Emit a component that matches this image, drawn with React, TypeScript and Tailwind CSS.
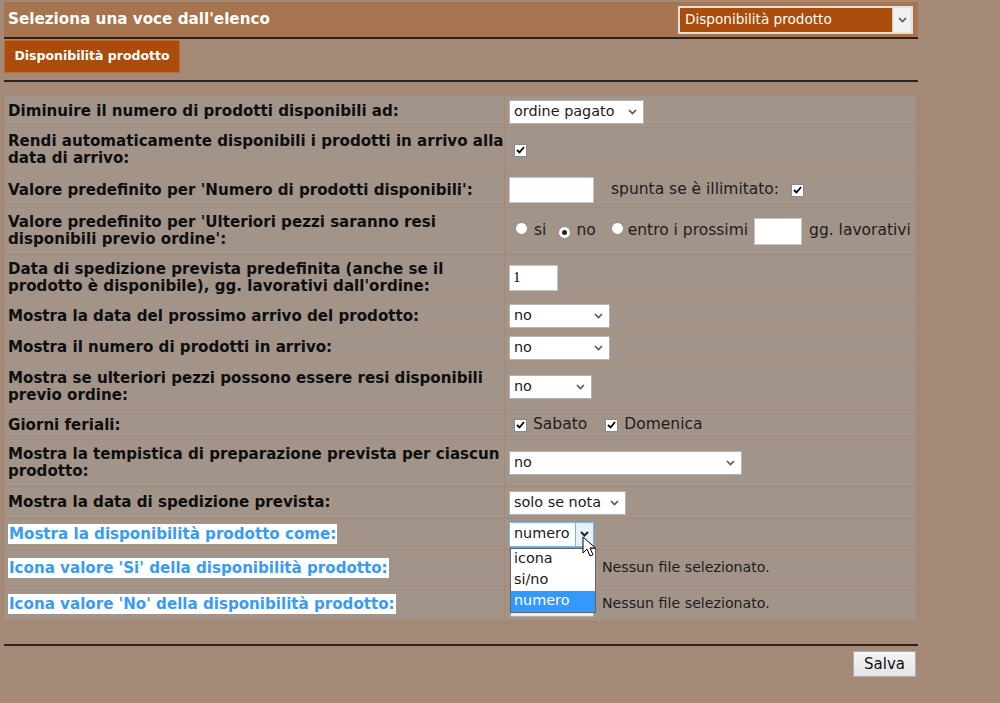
import React from 'react'

const sans = "font-['DejaVu_Sans',Verdana,sans-serif]"
const ctl = "font-['DejaVu_Sans',Tahoma,sans-serif]"

function Chevron({ dark = false }: { dark?: boolean }) {
  return (
    <svg width="9" height="6" viewBox="0 0 9 6" className="shrink-0">
      <path d="M1 1l3.5 3.5L8 1" fill="none" stroke={dark ? '#222' : '#555'} strokeWidth={dark ? 2 : 1.6} />
    </svg>
  )
}

function Select({ w, value }: { w: string; value: string }) {
  return (
    <div
      className={`${w} h-[24px] bg-white border border-[#b3b3b3] flex items-center justify-between pl-[4px] pr-[6px] text-[14.4px] text-[#1a1a1a] ${ctl}`}
    >
      <span>{value}</span>
      <Chevron />
    </div>
  )
}

function Check() {
  return (
    <span className="w-[13px] h-[13px] bg-white border border-[#8a8a8a] inline-flex items-center justify-center shrink-0">
      <svg width="9" height="8" viewBox="0 0 9 8">
        <path d="M1 4l2.5 2.5L8 1" fill="none" stroke="#000" strokeWidth="1.8" />
      </svg>
    </span>
  )
}

function Radio({ on = false }: { on?: boolean }) {
  return (
    <span className="w-[13px] h-[13px] rounded-full bg-white border border-[#8a8a8a] inline-flex items-center justify-center shrink-0">
      {on && <span className="w-[5px] h-[5px] rounded-full bg-[#222]" />}
    </span>
  )
}

function Row({
  h,
  label,
  hi = false,
  children,
}: {
  h: string
  label: React.ReactNode
  hi?: boolean
  children?: React.ReactNode
}) {
  return (
    <div className={`flex ${h} border-b border-[#a9896f]`}>
      <div className="w-[500px] shrink-0 border-r border-[#a9896f] flex items-center pl-[3px]">
        {hi ? (
          <span className={`bg-white text-[#3a9af7] font-bold text-[15.1px] leading-[20px] px-[1px] whitespace-nowrap ${sans}`}>
            {label}
          </span>
        ) : (
          <span className={`text-[#0e0e0e] font-bold text-[15.1px] leading-[17px] whitespace-nowrap ${sans}`}>{label}</span>
        )}
      </div>
      <div className={`flex-1 flex items-center pl-[4px] text-[15.5px] text-[#1d1d1d] ${ctl}`}>{children}</div>
    </div>
  )
}

function FileRow() {
  return (
    <div className="flex items-center">
      <div className="w-[84px] h-[26px] bg-[#ededed] border border-[#adadad] ml-[1px]" />
      <span className="ml-[8px] text-[14.2px]">Nessun file selezionato.</span>
    </div>
  )
}

export default function App() {
  return (
    <div className="min-h-[703px] w-full bg-[#a38976] relative overflow-hidden">
      <div className="w-[914px] ml-[4px] pt-[2px]">
        {/* header */}
        <div className="h-[35px] bg-[#a6744f] flex items-center justify-between pl-[4px] pr-[5px]">
          <span className={`text-white font-bold text-[15.2px] ${sans}`}>Seleziona una voce dall'elenco</span>
          <div className="w-[235px] h-[28px] border-2 border-[#e6e0dc] bg-[#ab4c0a] flex items-center justify-between">
            <span className={`text-white text-[13.6px] pl-[5px] ${ctl}`}>Disponibilità prodotto</span>
            <div className="w-[19px] h-full bg-[#f0f0f0] border-l border-[#c8c8c8] flex items-center justify-center">
              <Chevron />
            </div>
          </div>
        </div>
        <div className="h-[2px] bg-[#2a221d]" />

        {/* tab */}
        <div className="mt-[1px] h-[33px] w-[176px] bg-[#ab4c0a] border border-[#bd6a34] flex items-center justify-center">
          <span className={`text-white font-bold text-[12.5px] ${sans}`}>Disponibilità prodotto</span>
        </div>
        <div className="mt-[7px] h-[2px] bg-[#2a221d]" />

        {/* form table */}
        <div className="mt-[14px] ml-[1px] w-[911px] bg-[#a29489]">
          <Row h="h-[32px]" label="Diminuire il numero di prodotti disponibili ad:">
            <Select w="w-[135px]" value="ordine pagato" />
          </Row>
          <Row
            h="h-[45px]"
            label={
              <>
                Rendi automaticamente disponibili i prodotti in arrivo alla
                <br />
                data di arrivo:
              </>
            }
          >
            <span className="ml-[5px]">
              <Check />
            </span>
          </Row>
          <Row h="h-[35px]" label="Valore predefinito per 'Numero di prodotti disponibili':">
            <div className="w-[85px] h-[26px] bg-white border border-[#c4c4c4]" />
            <span className="ml-[17px]">spunta se è illimitato:</span>
            <span className="ml-[12px]">
              <Check />
            </span>
          </Row>
          <Row
            h="h-[47px]"
            label={
              <>
                Valore predefinito per 'Ulteriori pezzi saranno resi
                <br />
                disponibili previo ordine':
              </>
            }
          >
            <span className="ml-[6px]">
              <Radio />
            </span>
            <span className="ml-[6px]">si</span>
            <span className="ml-[12px]">
              <Radio on />
            </span>
            <span className="ml-[5px]">no</span>
            <span className="ml-[15px]">
              <Radio />
            </span>
            <span className="ml-[4px]">entro i prossimi</span>
            <div className="ml-[6px] w-[48px] h-[27px] bg-white border border-[#c4c4c4]" />
            <span className="ml-[7px] whitespace-nowrap">gg. lavorativi</span>
          </Row>
          <Row
            h="h-[46px]"
            label={
              <>
                Data di spedizione prevista predefinita (anche se il
                <br />
                prodotto è disponibile), gg. lavorativi dall'ordine:
              </>
            }
          >
            <div className="w-[49px] h-[26px] bg-white border border-[#c4c4c4] flex items-center pl-[3px]">
              <span className="font-['Liberation_Serif',serif] text-[15px] text-black">1</span>
            </div>
          </Row>
          <Row h="h-[31px]" label="Mostra la data del prossimo arrivo del prodotto:">
            <Select w="w-[101px]" value="no" />
          </Row>
          <Row h="h-[32px]" label="Mostra il numero di prodotti in arrivo:">
            <Select w="w-[101px]" value="no" />
          </Row>
          <Row
            h="h-[47px]"
            label={
              <>
                Mostra se ulteriori pezzi possono essere resi disponibili
                <br />
                previo ordine:
              </>
            }
          >
            <Select w="w-[83px]" value="no" />
          </Row>
          <Row h="h-[29px]" label="Giorni feriali:">
            <span className="ml-[5px]">
              <Check />
            </span>
            <span className="ml-[6px]">Sabato</span>
            <span className="ml-[18px]">
              <Check />
            </span>
            <span className="ml-[6px]">Domenica</span>
          </Row>
          <Row
            h="h-[47px]"
            label={
              <>
                Mostra la tempistica di preparazione prevista per ciascun
                <br />
                prodotto:
              </>
            }
          >
            <Select w="w-[233px]" value="no" />
          </Row>
          <Row h="h-[32px]" label="Mostra la data di spedizione prevista:">
            <Select w="w-[117px]" value="solo se nota" />
          </Row>
          <Row h="h-[31px]" hi label="Mostra la disponibilità prodotto come:">
            <div className="relative">
              <div className={`w-[85px] h-[25px] bg-white border border-[#7eb4ea] flex items-center text-[14.4px] text-[#1a1a1a] ${ctl}`}>
                <span className="pl-[4px] flex-1">numero</span>
                <div className="w-[18px] h-full bg-[#e5f1fb] border-l border-[#7eb4ea] flex items-center justify-center">
                  <Chevron dark />
                </div>
              </div>
              {/* open options list */}
              <div className={`absolute left-[1px] top-[26px] z-10 w-[86px] bg-white border border-[#646464] text-[14.4px] text-[#1a1a1a] ${ctl}`}>
                <div className="h-[21px] flex items-center pl-[3px]">icona</div>
                <div className="h-[21px] flex items-center pl-[3px]">si/no</div>
                <div className="h-[21px] flex items-center pl-[3px] bg-[#3399ff] text-white">numero</div>
              </div>
              {/* mouse pointer */}
              <svg className="absolute left-[73px] top-[14px] z-20" width="14" height="22" viewBox="0 0 14 22">
                <path d="M1 1v16l4-4 3 7 3-1.3-3-6.7h5.5z" fill="#fff" stroke="#000" strokeWidth="1" strokeLinejoin="round" />
              </svg>
            </div>
          </Row>
          <Row h="h-[37px]" hi label="Icona valore 'Si' della disponibilità prodotto:">
            <FileRow />
          </Row>
          <Row h="h-[34px]" hi label="Icona valore 'No' della disponibilità prodotto:">
            <FileRow />
          </Row>
        </div>

        <div className="mt-[23px] h-[2px] bg-[#2a221d]" />
        <div className="flex justify-end pr-[2px] mt-[5px]">
          <button
            type="button"
            className={`w-[63px] h-[26px] bg-gradient-to-b from-[#f4f4f4] to-[#e4e4e4] border border-[#adadad] text-[15px] text-[#111] ${ctl}`}
          >
            Salva
          </button>
        </div>
      </div>
    </div>
  )
}
